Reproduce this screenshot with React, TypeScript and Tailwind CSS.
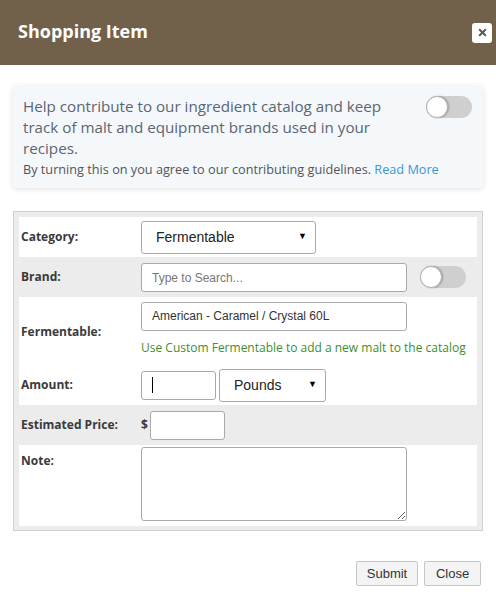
import { X } from 'lucide-react';

const openSans = { fontFamily: '"Open Sans", "Noto Sans", sans-serif' };
const arial = { fontFamily: '"Liberation Sans", Arial, sans-serif' };

function Toggle() {
  return (
    <div className="w-[46px] h-[22px] rounded-full bg-[#cfcfcf] flex items-center shrink-0">
      <div className="w-[22px] h-[22px] rounded-full bg-white border border-[#b5b5b5] shadow-[1px_0_2px_rgba(0,0,0,0.25)]" />
    </div>
  );
}

function FakeSelect({ value, className, textClass }: { value: string; className: string; textClass: string }) {
  return (
    <div
      className={`flex items-center justify-between bg-white border border-[#a9a9a9] rounded-[3px] text-[#222] ${className}`}
      style={arial}
    >
      <span className={textClass}>{value}</span>
      <span className="text-[9px] text-black">▼</span>
    </div>
  );
}

function Row({ label, shaded, children, className, labelClass }: { label: string; shaded?: boolean; children: React.ReactNode; className?: string; labelClass?: string }) {
  return (
    <div className={`flex px-[2px] ${shaded ? 'bg-[#ececec]' : 'bg-white'} ${className ?? 'items-center h-[40px]'}`}>
      <div className={`w-[120px] shrink-0 text-[12px] font-bold text-[#3a3a3a] ${labelClass ?? ''}`} style={openSans}>
        {label}
      </div>
      {children}
    </div>
  );
}

export default function App() {
  return (
    <div className="w-[496px] h-[598px] bg-white flex flex-col">
      {/* Header */}
      <div className="h-[65px] bg-[#72614a] flex items-center justify-between pl-[18px] pr-[4px] shrink-0">
        <h1 className="text-[18px] font-bold text-white mb-[2px]" style={openSans}>
          Shopping Item
        </h1>
        <button className="w-[20px] h-[20px] bg-white rounded-[3px] flex items-center justify-center">
          <X className="w-[11px] h-[11px] text-[#5a5a5a]" strokeWidth={4.5} />
        </button>
      </div>

      {/* Contribute box */}
      <div className="mx-[13px] mt-[21px] h-[102px] bg-[#f4f8fb] rounded-[4px] shadow-[0_1px_6px_rgba(0,0,0,0.12)] flex pl-[10px] pr-[11px] pt-[10px]">
        <div className="flex-1 min-w-0" style={openSans}>
          <p className="text-[15.2px] leading-[21px] text-[#5c6573] pr-[30px]">
            Help contribute to our ingredient catalog and keep track of malt and equipment brands used in your recipes.
          </p>
          <p className="text-[12.7px] leading-[20px] text-[#555] whitespace-nowrap">
            By turning this on you agree to our contributing guidelines.{' '}
            <span className="text-[#3a97d4]">Read More</span>
          </p>
        </div>
        <Toggle />
      </div>

      {/* Form panel */}
      <div className="mx-[13px] mt-[23px] border border-[#cfcfcf] bg-[#ececec] p-[5px] pb-[4px]">
        <Row label="Category:">
          <FakeSelect value="Fermentable" className="w-[175px] h-[33px] pl-[14px] pr-[8px]" textClass="text-[14px]" />
        </Row>

        <Row label="Brand:" shaded>
          <input
            placeholder="Type to Search..."
            className="w-[266px] h-[29px] bg-white border border-[#a9a9a9] rounded-[3px] px-[10px] text-[12px] placeholder:text-[#777] outline-none mt-[1px]"
            style={arial}
          />
          <div className="ml-[13px]">
            <Toggle />
          </div>
        </Row>

        <Row label="Fermentable:" className="items-center h-[68px] pb-[4px]" labelClass="mt-[6px]">
          <div className="flex flex-col">
            <input
              defaultValue="American - Caramel / Crystal 60L"
              className="w-[266px] h-[29px] bg-white border border-[#a9a9a9] rounded-[3px] px-[10px] text-[12px] text-[#333] outline-none"
              style={arial}
            />
            <p className="text-[12px] text-[#3d8f2b] mt-[8px] whitespace-nowrap" style={openSans}>
              Use Custom Fermentable to add a new malt to the catalog
            </p>
          </div>
        </Row>

        <Row label="Amount:">
          <div className="flex items-center gap-[3px]">
            <div className="w-[75px] h-[29px] bg-white border border-[#a9a9a9] rounded-[3px] flex items-center pl-[10px]">
              <div className="w-px h-[16px] bg-black" />
            </div>
            <FakeSelect value="Pounds" className="w-[107px] h-[33px] pl-[14px] pr-[8px]" textClass="text-[14px]" />
          </div>
        </Row>

        <Row label="Estimated Price:" shaded>
          <div className="flex items-center">
            <span className="text-[12px] font-bold text-[#3a3a3a] w-[9px]" style={openSans}>$</span>
            <input
              className="w-[75px] h-[29px] bg-white border border-[#a9a9a9] rounded-[3px] px-[6px] text-[12px] outline-none"
              style={arial}
            />
          </div>
        </Row>

        <Row label="Note:" className="items-start h-[81px] pt-[2px]" labelClass="mt-[5px]">
          <textarea
            aria-label="Note"
            className="w-[266px] h-[74px] bg-white border border-[#a9a9a9] rounded-[3px] outline-none"
            style={arial}
          />
        </Row>
      </div>

      {/* Footer buttons */}
      <div className="flex justify-end gap-[6px] mt-[30px] pr-[15px]">
        <button
          className="w-[62px] h-[25px] bg-[#f4f4f4] border border-[#c6c6c6] rounded-[2px] text-[13px] text-[#333]"
          style={arial}
        >
          Submit
        </button>
        <button
          className="w-[57px] h-[25px] bg-[#f4f4f4] border border-[#c6c6c6] rounded-[2px] text-[13px] text-[#333]"
          style={arial}
        >
          Close
        </button>
      </div>
    </div>
  );
}
